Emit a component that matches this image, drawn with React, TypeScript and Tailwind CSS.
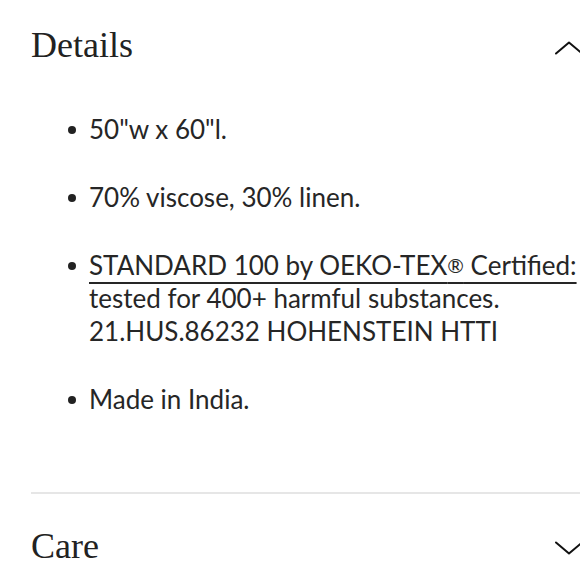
import React from "react";

const items: React.ReactNode[] = [
  <>50"w x 60"l.</>,
  <>70% viscose, 30% linen.</>,
  <>
    <span className="underline decoration-[2px] underline-offset-[7px]">
      STANDARD 100 by OEKO-TEX<sup className="text-[20px] relative -top-[2px]">®</sup> Certified:
    </span>{" "}
    tested for 400+ harmful substances. 21.HUS.86232 HOHENSTEIN HTTI
  </>,
  <>Made in India.</>,
];

function Chevron({ up }: { up?: boolean }) {
  return (
    <svg width="30" height="14" viewBox="0 0 30 14" fill="none" className="shrink-0">
      <path
        d={up ? "M1 12.5 L14 1.5 L27 12.5" : "M1 1.5 L14 12.5 L27 1.5"}
        stroke="#111"
        strokeWidth="2"
        strokeLinecap="round"
        strokeLinejoin="round"
      />
    </svg>
  );
}

export default function App() {
  const serif = "font-['Liberation_Serif','DejaVu_Serif',serif]";
  return (
    <div className="w-[580px] h-[580px] overflow-hidden bg-white text-[#222]">
      <div className="w-[585px] pl-[31px]">
        {/* Details */}
        <div className="mt-[25px] flex items-center justify-between h-[40px]">
          <h2 className={`${serif} text-[36px] leading-[40px] text-[#222]`}>Details</h2>
          <div className="pt-[6px]">
            <Chevron up />
          </div>
        </div>
        <ul className="mt-[48px] pl-[37px] space-y-[35px] font-['Lato','Open_Sans',sans-serif] text-[26px] leading-[33px] text-[#262626]">
          {items.map((c, i) => (
            <li key={i} className="flex items-start">
              <span className="mt-[13px] w-[8px] h-[8px] rounded-full bg-[#222] shrink-0" />
              <span className="ml-[13px] max-w-[495px]">{c}</span>
            </li>
          ))}
        </ul>
        <div className="mt-[76px] h-[2px] bg-[#e6e6e6]" />
        {/* Care */}
        <div className="mt-[32px] flex items-center justify-between h-[40px]">
          <h2 className={`${serif} text-[36px] leading-[40px] text-[#222]`}>Care</h2>
          <div className="pt-[4px]">
            <Chevron />
          </div>
        </div>
      </div>
    </div>
  );
}
